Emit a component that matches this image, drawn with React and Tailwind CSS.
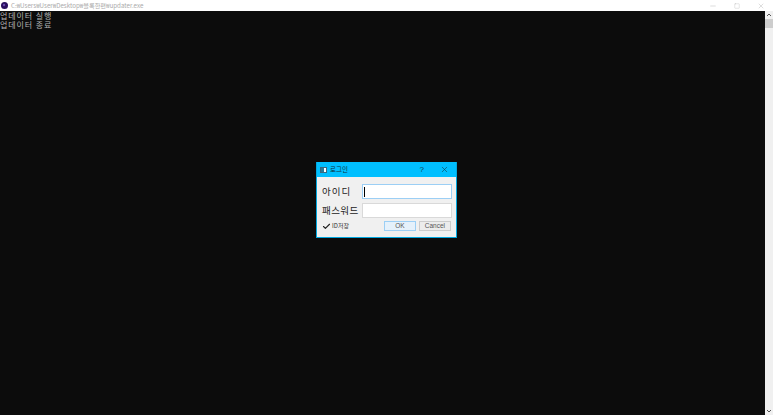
import { Minus, Square, X, Check } from 'lucide-react'

const KR = "font-['Noto_Sans_CJK_KR','Noto_Sans',sans-serif]"

function LoginDialog() {
  return (
    <div className={`absolute left-[316px] top-[162px] w-[141px] h-[76px] bg-[#f0f0f0] border-x border-b border-[#00a8e0] ${KR}`}>
      {/* Title */}
      <div className="flex items-center h-[15px] bg-[#00bfff] pl-[3px]">
        <div className="flex w-[7px] h-[6px] bg-white border border-[#3a6a80]">
          <div className="w-[3px] bg-[#2a7a9a]" />
        </div>
        <span className="ml-[3px] text-[6.5px] leading-[15px] text-[#10303c]">로그인</span>
        <span className="ml-auto text-[8px] leading-[15px] text-[#10404f] font-['Liberation_Sans',sans-serif]">?</span>
        <X size={9} strokeWidth={1.6} className="ml-[16px] mr-[7px] text-[#10404f]" />
      </div>

      {/* Rows */}
      <div className="flex flex-col gap-[4px] pt-[7px] pl-[5px]">
        <div className="flex items-center h-[15px]">
          <span className="w-[40px] text-[9.5px] leading-none tracking-[1px] text-[#222]">아이디</span>
          <div className="flex items-center w-[90px] h-[15px] bg-white border border-[#9ccff5] pl-[1px]">
            <div className="w-px h-[10px] bg-black" />
          </div>
        </div>
        <div className="flex items-center h-[15px]">
          <span className="w-[40px] text-[9.5px] leading-none tracking-[0.4px] text-[#222]">패스워드</span>
          <div className="w-[90px] h-[15px] bg-white border border-[#d9d9d9]" />
        </div>
      </div>

      {/* Footer */}
      <div className="flex items-center pt-[3px] pl-[5px]">
        <Check size={9} strokeWidth={3} className="text-[#222]" />
        <span className="ml-[1px] text-[6px] leading-none text-[#333]">ID저장</span>
        <div className="ml-[35px] flex gap-[3px]">
          <button className="w-[32px] h-[10px] bg-[#e5f1fb] border border-[#9ccff5] text-[6.5px] leading-none text-[#555] font-['Liberation_Sans',sans-serif]">OK</button>
          <button className="w-[32px] h-[10px] bg-[#ececec] border border-[#cccccc] text-[6.5px] leading-none text-[#555] font-['Liberation_Sans',sans-serif]">Cancel</button>
        </div>
      </div>
    </div>
  )
}

export default function App() {
  return (
    <div className="relative flex flex-col w-[773px] h-[415px] overflow-hidden bg-[#0c0c0c]">
      {/* Window title bar */}
      <div className={`flex items-center h-[11px] bg-white ${KR}`}>
        <svg width="7" height="7" viewBox="0 0 7 7" className="ml-[1px]">
          <circle cx="3.5" cy="3.5" r="3.5" fill="#2a1060" />
          <circle cx="3" cy="3" r="1.2" fill="#6a4ab0" />
        </svg>
        <span className="ml-[3px] text-[6.2px] leading-[11px] text-[#ababab]">C:₩Users₩User₩Desktop₩블록한편₩updater.exe</span>
        <div className="ml-auto flex items-center text-[#9a9a9a]">
          <Minus size={8} strokeWidth={1} />
          <Square size={6} strokeWidth={1} className="ml-[17px]" />
          <X size={8} strokeWidth={1} className="ml-[17px] mr-[8px]" />
        </div>
      </div>

      <div className="flex flex-1 min-h-0">
        {/* Console */}
        <div className={`flex-1 pt-px text-[8px] leading-[8.5px] tracking-[0.9px] text-[#b4b4b4] ${KR}`}>
          <p>업데이터 실행</p>
          <p>업데이터 종료</p>
        </div>
        {/* Scrollbar */}
        <div className="flex flex-col items-center w-[8px] bg-[#f0f0f0]">
          <svg width="6" height="6" viewBox="0 0 6 6" className="my-[1px]"><path d="M1 4 L3 2 L5 4" fill="none" stroke="#555" strokeWidth="1" /></svg>
          <div className="w-full h-[9px] bg-[#cdcdcd]" />
          <svg width="6" height="6" viewBox="0 0 6 6" className="mt-auto mb-[1px]"><path d="M1 2 L3 4 L5 2" fill="none" stroke="#555" strokeWidth="1" /></svg>
        </div>
      </div>

      <LoginDialog />
    </div>
  )
}
